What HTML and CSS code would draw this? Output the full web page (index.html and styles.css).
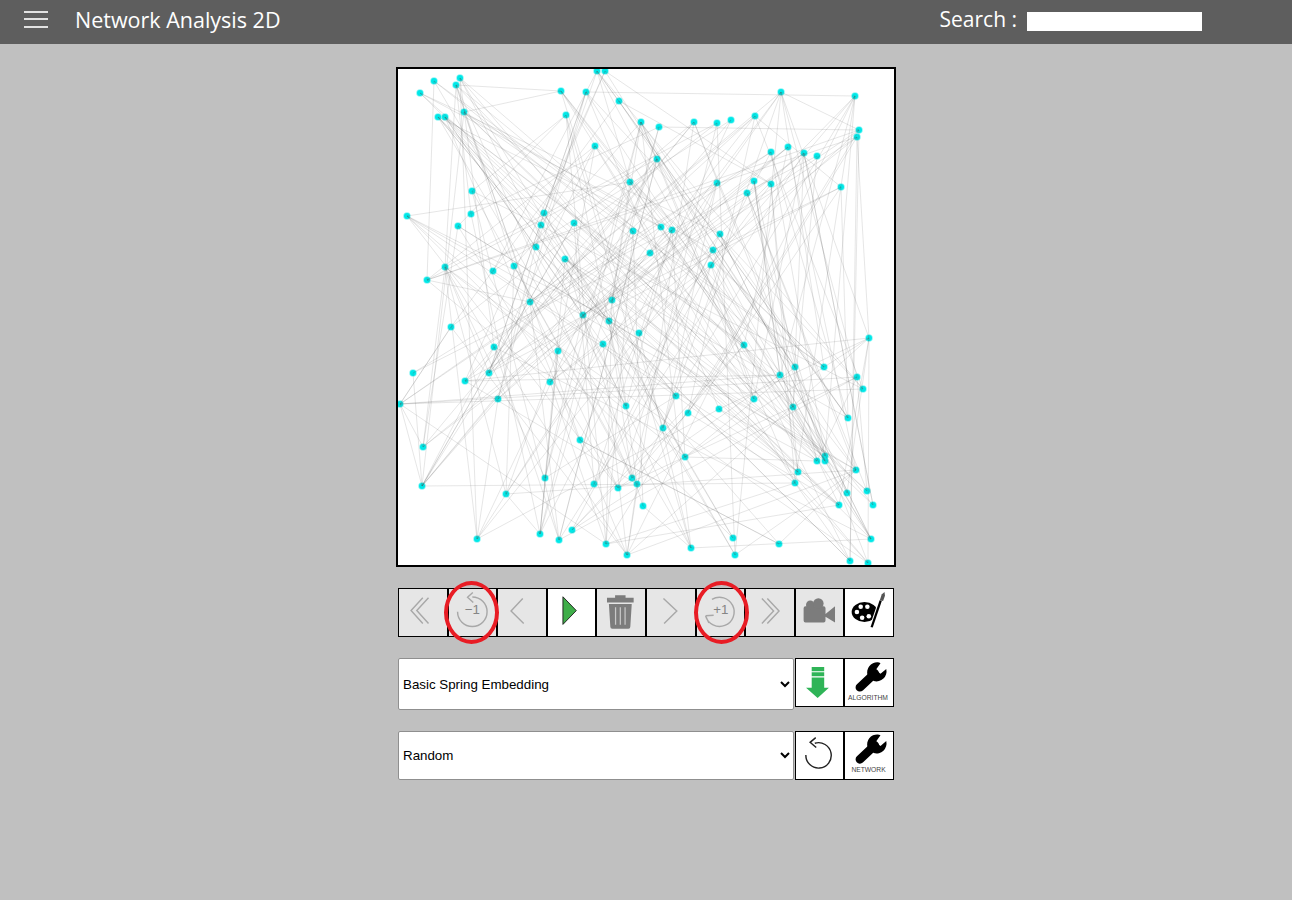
FILE: index.html
```html
<!DOCTYPE html>
<html lang="en">
<head>
  <meta charset="UTF-8">
  <title>Network Analysis 2D</title>
  <link rel="stylesheet" href="styles.css">
</head>
<body>

  <header class="topbar">
    <button class="menu-btn" aria-label="Menu"><span></span><span></span><span></span></button>
    <h1 class="app-title">Network Analysis 2D</h1>
    <label class="search" for="search">Search :</label>
    <input class="search-input" id="search" type="text">
  </header>

  <main class="content">
    <div class="canvas">
      <svg id="graph" viewBox="398 69 496 496"></svg>
    </div>

    <div class="toolbar">
      <button class="tool off">
        <svg viewBox="0 0 50 49"><path class="thin" d="M25 9 12.700 22.500 25 36M31 9 18.700 22.500 31 36"/></svg>
      </button>
      <button class="tool off">
        <svg viewBox="0 0 50 49">
          <path class="thin" d="M24.500 8.200A15.500 15.500 0 1 1 9 23.700M25 3.500 19.500 8.500 25.500 14"/>
          <text class="step" x="24.500" y="26.500">−1</text>
        </svg>
      </button>
      <button class="tool off">
        <svg viewBox="0 0 50 49"><path class="thin" d="M26 9.700 13.700 23 27 36"/></svg>
      </button>
      <button class="tool">
        <svg viewBox="0 0 50 49"><path class="play" d="M15.700 8 29.700 22.500 15.700 37Z"/></svg>
      </button>
      <button class="tool off">
        <svg viewBox="0 0 50 49">
          <path class="gray" d="M19 6.500h11v2.500h8.500v5H10.500v-5H19ZM12.500 15.500h24l-1.500 24a2 2 0 0 1-2 2H16a2 2 0 0 1-2-2Z"/>
          <path class="trash-lines" d="M19.500 19v18.500M24.500 19v18.500M29.500 19v18.500"/>
        </svg>
      </button>
      <button class="tool off">
        <svg viewBox="0 0 50 49"><path class="thin" d="M17.300 9.700 31.300 23 18 36"/></svg>
      </button>
      <button class="tool off">
        <svg viewBox="0 0 50 49">
          <path class="thin" d="M15.700 10.800A15.300 15.300 0 1 1 9 28M9 28 17.500 27.300M9 28 12.500 35.500"/>
          <text class="step" x="25" y="26.500">+1</text>
        </svg>
      </button>
      <button class="tool off">
        <svg viewBox="0 0 50 49"><path class="thin" d="M16.700 9.700 29 23 16.700 36M22.400 9.700 34.700 23 22.400 36"/></svg>
      </button>
      <button class="tool off">
        <svg viewBox="0 0 50 49">
          <path class="gray" d="M8 20a2 2 0 0 1 2-2h19a2 2 0 0 1 2 2v13a2 2 0 0 1-2 2H10a2 2 0 0 1-2-2ZM31 26 41 18V35L31 29Z"/>
          <circle class="gray" cx="15" cy="16.500" r="4.500"/>
          <circle class="gray" cx="23.500" cy="15" r="5.500"/>
        </svg>
      </button>
      <button class="tool">
        <svg viewBox="0 0 50 49">
          <ellipse class="ink" cx="20.500" cy="24" rx="13.500" ry="10.500"/>
          <circle class="hole" cx="12.500" cy="24" r="2.400"/>
          <circle class="hole" cx="16.500" cy="18.500" r="2.400"/>
          <circle class="hole" cx="23.500" cy="18.500" r="2.400"/>
          <circle class="hole" cx="18" cy="30" r="2.400"/>
          <circle class="hole" cx="25" cy="28.500" r="2.400"/>
          <path class="brush-edge" d="M28 40 37.500 12"/>
          <path class="brush" d="M28 40 37.500 12"/>
          <path class="brush-tip" d="M36.500 12 38.500 5.500 41.500 3 42 7 40 12.500Z"/>
        </svg>
      </button>
      <span class="ring ring-back"></span>
      <span class="ring ring-next"></span>
    </div>

    <div class="row row-algo">
      <select class="picker">
        <option>Basic Spring Embedding</option>
      </select>
      <button class="tool">
        <svg viewBox="0 0 50 49">
          <path class="green" d="M16.700 8H30V30H35L23 41 10.700 30H16.700Z"/>
          <path class="stripes" d="M16 13H31M16 18.500H31"/>
        </svg>
      </button>
      <button class="tool">
        <svg viewBox="0 0 50 49">
          <use href="#wrench" y="0"/>
          <text class="tag" x="24" y="42.500">ALGORITHM</text>
        </svg>
      </button>
    </div>

    <div class="row row-net">
      <select class="picker">
        <option>Random</option>
      </select>
      <button class="tool">
        <svg viewBox="0 0 50 49">
          <path class="undo" d="M20 11.500A13.500 13.500 0 1 1 10.500 24M21 5.500 15 10.500 21.500 16"/>
        </svg>
      </button>
      <button class="tool">
        <svg viewBox="0 0 50 49">
          <use href="#wrench" y="-1"/>
          <text class="tag" x="24.500" y="41.500">NETWORK</text>
        </svg>
      </button>
    </div>
  </main>

  <svg class="defs" aria-hidden="true">
    <defs>
      <g id="wrench">
        <path class="ink-line" d="M15.500 29.500 31 15"/>
        <path class="ink" d="M34 3.500A10.500 10.500 0 0 0 23.500 17L30 23A10.500 10.500 0 0 0 43 10.500L37 15.500 32 11.500 37 4.500A10 10 0 0 0 34 3.500Z"/>
      </g>
    </defs>
  </svg>

  <script src="network.js"></script>
</body>
</html>
```

FILE: styles.css
```css
body {
  margin: 0;
  background-color: #c0c0c0;
  font-family: "Open Sans", "Liberation Sans", sans-serif;
}

.topbar {
  display: flex;
  align-items: center;
  box-sizing: border-box;
  height: 44px;
  padding-bottom: 6px;
  background-color: #5e5e5e;
  color: #fff;
}

.menu-btn {
  display: flex;
  flex-direction: column;
  gap: 5.500px;
  width: 24px;
  margin-left: 24px;
  padding: 0;
  border: none;
  background: none;
}

.menu-btn span {
  height: 2px;
  background-color: #e2e2e2;
}

.app-title {
  margin: 0 0 0 27px;
  font-size: 21.500px;
  font-weight: 400;
}

.search {
  margin-left: auto;
  font-size: 21px;
}

.search-input {
  width: 175px;
  height: 19px;
  margin: 5px 90px 0 10px;
  padding: 0;
  border: none;
  background-color: #fff;
}

.content {
  display: flex;
  flex-direction: column;
  align-items: center;
}

.canvas {
  width: 496px;
  height: 496px;
  margin-top: 23px;
  border: 2px solid #000;
  background-color: #fff;
}

#graph {
  display: block;
  width: 100%;
  height: 100%;
  filter: blur(0.4px);
}

#graph line {
  stroke: #555;
  stroke-opacity: 0.17;
  stroke-width: 0.9;
}

#graph circle {
  fill: #00e8e8;
  stroke: #00e8e8;
  stroke-opacity: 0.45;
  stroke-width: 1.600;
}

.toolbar,
.row {
  display: flex;
  width: 496px;
}

.toolbar {
  position: relative;
  height: 49px;
  margin-top: 21px;
}

.toolbar .tool {
  flex: 1;
}

.row {
  margin-top: 21px;
}

.row .tool {
  flex: 0 0 50px;
}

.row .picker + .tool {
  flex-basis: 49px;
  margin-left: 1px;
}

.row-algo {
  height: 52px;
}

.row-net {
  height: 49px;
}

.picker {
  flex: 1;
  min-width: 0;
  padding-left: 0;
  border: 1px solid #8f8f8f;
  border-radius: 2px;
  background-color: #fff;
  color: #000;
  font-family: "Liberation Sans", Arial, sans-serif;
  font-size: 13.330px;
}

.tool {
  box-sizing: border-box;
  width: 50px;
  height: 49px;
  padding: 0;
  border: 1px solid #000;
  background-color: #fff;
}

.tool.off {
  background-color: #e6e6e6;
}

.tool svg {
  display: block;
  width: 100%;
  height: 100%;
}

.ring {
  position: absolute;
  box-sizing: border-box;
  top: -7px;
  width: 55px;
  height: 63px;
  border: 4.500px solid #e81c24;
  border-radius: 50%;
}

.ring-back {
  left: 46px;
}

.ring-next {
  left: 296px;
}

.thin,
.undo {
  fill: none;
  stroke: #a8a8a8;
  stroke-width: 1.500;
}

.undo {
  stroke: #222;
}

.step {
  fill: #858585;
  font-family: "Liberation Sans", Arial, sans-serif;
  font-size: 14px;
  text-anchor: middle;
}

.play {
  fill: #3fae49;
  stroke: #222;
  stroke-width: 1;
}

.gray {
  fill: #7c7c7c;
}

.trash-lines {
  fill: none;
  stroke: #c8c8c8;
  stroke-width: 1.300;
}

.ink {
  fill: #000;
}

.ink-line {
  fill: none;
  stroke: #000;
  stroke-linecap: round;
  stroke-width: 9;
}

.hole {
  fill: #fff;
}

.brush {
  fill: none;
  stroke: #000;
  stroke-width: 2.400;
}

.brush-edge {
  fill: none;
  stroke: #fff;
  stroke-width: 4.500;
}

.brush-tip {
  fill: #555;
}

.green {
  fill: #2fb457;
}

.stripes {
  fill: none;
  stroke: #fff;
  stroke-width: 1.200;
}

.tag {
  fill: #444;
  font-family: "Liberation Sans", Arial, sans-serif;
  font-size: 7px;
  text-anchor: middle;
}

.defs {
  position: absolute;
  width: 0;
  height: 0;
}
```

FILE: network.js
```js
// node positions, same px as the page
const nodes = [
  [597,71],[605,71],[460,78],[434,81],[456,85],[420,93],[561,91],[586,92],[781,92],[855,96],
  [619,101],[464,112],[438,117],[445,117],[566,115],[641,122],[659,127],[694,122],[717,123],[731,120],
  [755,116],[859,130],[857,137],[595,146],[771,152],[788,147],[804,153],[817,156],[657,159],[630,182],
  [717,183],[754,181],[771,184],[747,193],[841,187],[472,191],[407,216],[471,214],[458,226],[544,213],
  [541,225],[574,223],[633,231],[661,227],[672,230],[720,234],[536,247],[565,259],[650,253],[713,250],
  [711,265],[445,267],[493,271],[514,266],[427,280],[530,302],[612,300],[583,315],[609,321],[451,327],
  [639,333],[869,338],[494,347],[744,345],[558,351],[603,344],[413,373],[489,373],[465,381],[550,382],
  [780,375],[795,367],[824,367],[857,377],[863,389],[400,404],[498,399],[626,406],[676,396],[688,413],
  [719,409],[754,399],[793,407],[848,418],[663,428],[423,447],[580,440],[685,457],[817,461],[825,456],
  [825,461],[856,470],[798,472],[545,478],[594,484],[618,488],[632,478],[637,484],[422,486],[795,483],
  [506,494],[847,493],[867,491],[643,506],[839,505],[873,505],[572,530],[540,534],[559,540],[477,539],
  [606,544],[733,538],[691,548],[779,544],[627,555],[735,555],[871,539],[850,561],[868,563]
];

// edges that stand out in the picture
const fixed = [
  [586,92,855,96],[781,92,859,130],[659,127,859,130],[781,92,717,183],[407,216,630,182],[407,216,625,405],
  [456,85,561,91],[561,91,464,112],[561,91,730,300],[427,280,859,130],[427,280,857,137],[427,280,530,302],
  [400,404,857,377],[400,404,863,389],[400,404,780,375],[400,404,423,447],[400,404,606,544],[422,486,795,483],
  [422,486,413,373],[422,486,494,347],[506,494,856,470],[506,494,540,534],[477,539,445,267],[477,539,498,399],
  [869,338,868,563],[857,137,850,561],[857,137,869,338],[855,96,780,375],[871,539,793,407],[871,539,711,265],
  [871,539,720,234],[691,548,871,539],[691,548,643,506],[606,544,795,483],[606,544,839,505],[627,555,856,470],
  [735,555,663,428],[868,563,795,483],[456,85,530,302],[456,85,471,214],[456,85,445,267],[438,117,609,321],
  [445,117,583,315],[460,78,626,406],[434,81,427,280],[465,381,780,375],[465,381,869,338],
  [489,373,841,187],[550,382,857,137],[594,484,720,234],[632,478,744,345],[817,461,685,457],[817,461,719,409]
];

// mulberry32, so the picture stays the same on each load
let seed = 20417;
function rnd(n) {
  seed = (seed + 0x6D2B79F5) | 0;
  let t = Math.imul(seed ^ (seed >>> 15), 1 | seed);
  t = (t + Math.imul(t ^ (t >>> 7), 61 | t)) ^ t;
  return Math.floor(((t ^ (t >>> 14)) >>> 0) / 4294967296 * n);
}

const graph = document.getElementById('graph');
const ns = 'http://www.w3.org/2000/svg';

nodes.forEach(n => {
  const c = document.createElementNS(ns, 'circle');
  c.setAttribute('cx', n[0]);
  c.setAttribute('cy', n[1]);
  c.setAttribute('r', 3);
  graph.appendChild(c);
});

function addLine(x1, y1, x2, y2) {
  const l = document.createElementNS(ns, 'line');
  l.setAttribute('x1', x1);
  l.setAttribute('y1', y1);
  l.setAttribute('x2', x2);
  l.setAttribute('y2', y2);
  graph.appendChild(l);
}

fixed.forEach(e => addLine(e[0], e[1], e[2], e[3]));

// every node gets a couple of links, mostly steep ones like in the picture
nodes.forEach(a => {
  const links = 2 + rnd(2);
  for (let i = 0; i < links; i++) {
    let b = nodes[rnd(nodes.length)];
    for (let tries = 0; tries < 20; tries++) {
      const dx = Math.abs(a[0] - b[0]);
      const dy = Math.abs(a[1] - b[1]);
      if (dy > 70 && dx < dy * 2.2) break;
      b = nodes[rnd(nodes.length)];
    }
    addLine(a[0], a[1], b[0], b[1]);
  }
});
```
